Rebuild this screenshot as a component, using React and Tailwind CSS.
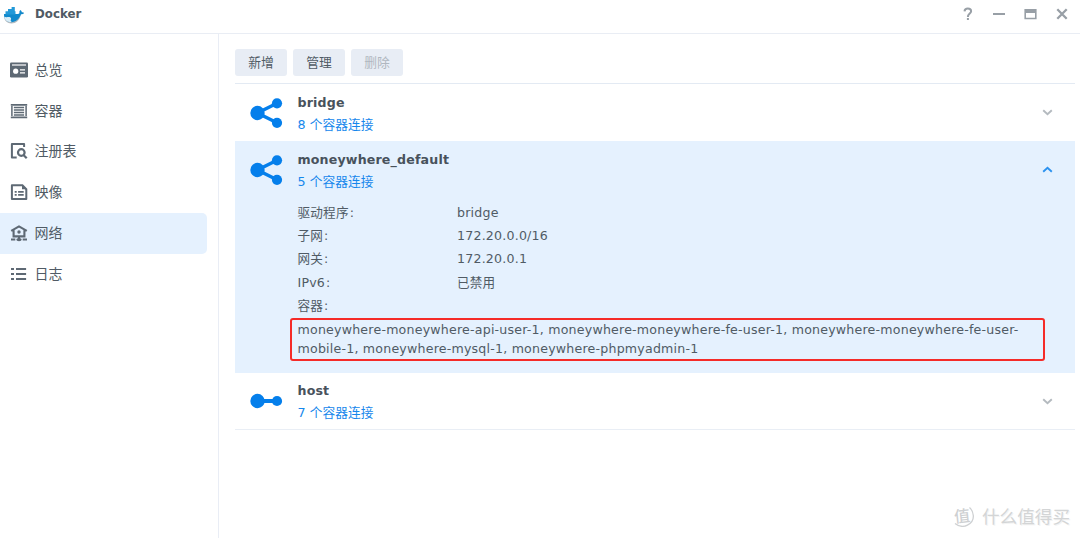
import React from "react";

const SANS = "font-['DejaVu_Sans','Noto_Sans_CJK_SC',sans-serif]";
const CJK = "font-['Noto_Sans_CJK_SC',sans-serif]";

function DockerLogo() {
  return (
    <svg className="block h-[20px] w-[22px]" viewBox="0 0 22 20">
      <path d="M1 9.500h14.400c1.500 0 2-1.400 2-2.700l3.500-.5c-.6 1-1.700 1.500-3.100 1.600C16.900 14.800 12.700 17.400 8.500 17.400 4.300 17.400 1 15 1 9.500z" fill="#b4bbc0" />
      <path d="M1 8h14c1.100 0 1.700-.7 1.400-1.900.1-1 .5-1.500 1-2 .9.600 1.300 1.200 1.400 2.200.9 0 1.700.2 2.200.6-.6 1-1.700 1.400-3 1.400-1.800 5-5.400 7.900-9.500 7.900C4.300 16.200.8 13.400 1 8z" fill="#1189cc" />
      <path d="M1.200 10.800c2.500 1 4.100-.2 5.900.4 1 .4 1.200 1.500.8 2.300-.5.800-.2 1.600.8 2.500-3.400.5-7-1.200-7.500-5.200z" fill="#d9edf7" />
      <path d="M2.500 5.200h10v3.200h-10zM5 2.900h6.800v2.600H5zM8.600.9h3.200v2.400H8.600z" fill="#2399d8" />
    </svg>
  );
}

function NavIcon({ name }) {
  return (
    <svg className="block size-[18px] shrink-0" viewBox="0 0 18 18" fill="none" stroke="#5e6974" strokeWidth="2">
      {name === "overview" && (
        <>
          <rect x="0" y="1.500" width="18" height="15" rx="1.200" fill="#5e6974" stroke="none" />
          <path d="M2 4h14" stroke="#fff" strokeWidth="1.200" />
          <circle cx="5.700" cy="10.200" r="2.600" fill="#fff" stroke="none" />
          <path d="M10 8.800h5M10 11.800h5" stroke="#fff" strokeWidth="1.200" />
        </>
      )}
      {name === "container" && (
        <>
          <path d="M.8 2.900h16.400M.8 15.300h16.400" strokeWidth="1.800" />
          <path d="M1.900 4v10M16.100 4v10" strokeWidth="1.500" />
          <path d="M3.900 5.600h10.200M3.900 8.100h10.200M3.900 10.600h10.200M3.900 13.100h10.200" strokeWidth="1.500" />
        </>
      )}
      {name === "registry" && (
        <>
          <path d="M14.100 5V2H1.900v13.500h4.800" strokeLinejoin="round" />
          <circle cx="11.300" cy="10.500" r="3.300" strokeWidth="2.200" />
          <path d="m13.500 12.900 3.200 3.300" strokeWidth="2.200" />
        </>
      )}
      {name === "image" && (
        <>
          <path d="M1.900 2.300h10.500l3.900 3.900v9.700H1.900z" strokeLinejoin="round" />
          <path d="M12 1.600v4.700h4.800z" fill="#5e6974" stroke="none" />
          <path d="M4.700 8.800h2m1.400 0h5.600M4.700 11.900h2m1.400 0h5.600" strokeWidth="1.700" />
        </>
      )}
      {name === "network" && (
        <>
          <path d="M1.200 6.900 9 2.400l7.800 4.500M3.600 6v6.400h10.800V6" strokeWidth="2.100" />
          <circle cx="9" cy="8" r="1.700" fill="#5e6974" stroke="none" />
          <path d="M9 12v4M1 15.400h4.300M12.700 15.400H17" />
          <ellipse cx="9" cy="15.600" rx="2.700" ry="1.600" fill="#5e6974" stroke="none" />
        </>
      )}
      {name === "log" && <path d="M1 4h3M1 9h3M1 14h3M6 4h10.100M6 9h10.100M6 14h10.100" strokeWidth="2" />}
    </svg>
  );
}

function NetworkIcon({ host }) {
  return (
    <svg className="block h-[32px] w-[33px]" viewBox="0 0 33 32" fill="#057feb" stroke="#057feb">
      <path d={host ? "M7 16h20" : "M27 6.300 7.500 16 27 25.800"} strokeWidth={host ? "4" : "3.400"} fill="none" />
      <circle cx="7.500" cy="16" r="7.200" stroke="none" />
      {host ? (
        <circle cx="27" cy="16" r="5.100" stroke="none" />
      ) : (
        <>
          <circle cx="27" cy="6.300" r="5.100" stroke="none" />
          <circle cx="27" cy="25.800" r="5.100" stroke="none" />
        </>
      )}
    </svg>
  );
}

function Chevron({ up }) {
  return (
    <svg className="block h-[7px] w-[11px]" viewBox="0 0 11 7" fill="none" stroke={up ? "#2c92ef" : "#b4babf"} strokeWidth="1.900">
      <path d={up ? "m1.200 5.700 4.300-4 4.300 4" : "m1.200 1.300 4.300 4 4.300-4"} />
    </svg>
  );
}

function NetworkHead({ name, count, up, host }) {
  return (
    <div className="flex h-[57px] items-center pl-[15px] pr-[22px]">
      <div className={host ? "pb-[1px]" : "pt-[0.500px]"}><NetworkIcon host={host} /></div>
      <div className={`ml-[14.500px] flex flex-1 flex-col ${host ? "" : "pt-[2px]"}`}>
        <span className="h-[22px] text-[12.600px] leading-[22px] font-bold tracking-[0.170px] text-[#48525c]">{name}</span>
        <span className="h-[21px] text-[12.700px] leading-[22px] tracking-[0.050px] text-[#1687ec]">{count} 个容器连接</span>
      </div>
      <Chevron up={up} />
    </div>
  );
}

const NAV = [
  ["overview", "总览"],
  ["container", "容器"],
  ["registry", "注册表"],
  ["image", "映像"],
  ["network", "网络"],
  ["log", "日志"],
];

const DETAILS = [
  ["驱动程序", "bridge"],
  ["子网", "172.20.0.0/16"],
  ["网关", "172.20.0.1"],
  ["IPv6", "已禁用"],
  ["容器", ""],
];

export default function App() {
  return (
    <div className={`relative flex h-[538px] w-[1080px] flex-col overflow-hidden bg-white text-[#505b65] ${SANS}`}>
      <header className="flex h-[34px] shrink-0 items-center border-b border-[#e9edf4] pb-[5px] pl-[3px] pr-[12px]">
        <div className="pt-[4px]"><DockerLogo /></div>
        <h1 className="ml-[10px] flex-1 pt-[1px] text-[11.800px] font-bold text-[#505a64]">Docker</h1>
        <div className="flex items-center gap-[19px] text-[#989fa6]">
          <svg className="h-[14px] w-[12px]" viewBox="0 0 12 14" fill="none" stroke="currentColor" strokeWidth="2">
            <path d="M2.500 4.300C2.700 2.200 4 1.500 5.800 1.500c2 0 3.300 1 3.300 2.700C9.100 6.500 5.900 6.800 5.900 10" />
            <path d="M5.900 11v2" strokeWidth="2" />
          </svg>
          <svg className="h-[14px] w-[12px]" viewBox="0 0 12 14"><path d="M0 7h12" stroke="currentColor" strokeWidth="2" /></svg>
          <svg className="h-[14px] w-[13px]" viewBox="0 0 13 14">
            <path d="M.4 2h12.200v10.300H.4zM2 6v4.700h9V6z" fill="currentColor" fillRule="evenodd" />
          </svg>
          <svg className="h-[14px] w-[12px]" viewBox="0 0 12 14"><path d="m1.300 2.300 9.400 9.400m0-9.400-9.400 9.400" stroke="currentColor" strokeWidth="2.300" /></svg>
        </div>
      </header>

      <div className="flex min-h-0 flex-1">
        <nav className={`w-[219px] shrink-0 border-r border-[#e9edf5] pt-[16px] ${CJK}`}>
          {NAV.map(([icon, label]) => (
            <div
              key={icon}
              className={`flex h-[40.800px] w-[207px] items-center gap-[7px] rounded-r-[5px] pb-[1px] pl-[9.500px] text-[14px] ${icon === "network" ? "bg-[#e5f1fe]" : ""}`}
            >
              <NavIcon name={icon} />
              <span className="pb-[1px]">{label}</span>
            </div>
          ))}
        </nav>

        <main className="flex-1 pl-[16px] pr-[5px] pt-[15px]">
          <div className={`flex h-[35px] items-start gap-[6px] border-b border-[#e3eaf3] text-[12.800px] ${CJK}`}>
            <button className="h-[27px] w-[52px] rounded-[3px] bg-[#e8edf5] pb-[2px]">新增</button>
            <button className="h-[27px] w-[52px] rounded-[3px] bg-[#e8edf5] pb-[2px]">管理</button>
            <button className="h-[27px] w-[52px] rounded-[3px] bg-[#e8edf5] pb-[2px] text-[#b0b7c0]">删除</button>
          </div>

          <NetworkHead name="bridge" count="8" />

          <section className="h-[232px] bg-[#e5f1fe]">
            <NetworkHead name="moneywhere_default" count="5" up />
            <dl className="pl-[62.500px] pt-[2.500px] text-[12.600px] tracking-[0.200px]">
              {DETAILS.map(([label, value]) => (
                <div key={label} className="flex h-[23.400px] items-center leading-[23px]">
                  <dt className="w-[159.500px]">{label}<span className="ml-[1px]">:</span></dt>
                  <dd>{value}</dd>
                </div>
              ))}
            </dl>
            <div className="ml-[55px] mt-[0.500px] h-[43px] w-[755px] rounded-[3px] border-2 border-[#f52b28] pl-[5.500px] text-[12.600px] leading-[19.500px] tracking-[0.205px]">
              <p className="whitespace-nowrap">moneywhere-moneywhere-api-user-1, moneywhere-moneywhere-fe-user-1, moneywhere-moneywhere-fe-user-</p>
              <p className="whitespace-nowrap">mobile-1, moneywhere-mysql-1, moneywhere-phpmyadmin-1</p>
            </div>
          </section>

          <div className="h-[57px] border-b border-[#e9eef5]">
            <NetworkHead name="host" count="7" host />
          </div>
        </main>
      </div>

      <div className={`absolute left-[952px] top-[503px] flex items-center gap-[8px] text-[#ced0d2] ${CJK}`}>
        <span className="relative flex size-[22px] items-center justify-center pr-[2px] pb-[2px]">
          <svg className="absolute inset-0" viewBox="0 0 22 22" fill="none" stroke="currentColor" strokeWidth="1.300">
            <path d="M3 18.500C11 25 22 19 21.300 10.500 21 7 19.800 4.500 17.500 2.500" />
          </svg>
          <span className="-rotate-6 text-[16px] leading-none font-medium">值</span>
        </span>
        <span className="text-[17.600px] leading-[26px] text-[#d3d5d6] [text-shadow:1px_1px_0_#f3f3f3]">什么值得买</span>
      </div>
    </div>
  );
}
